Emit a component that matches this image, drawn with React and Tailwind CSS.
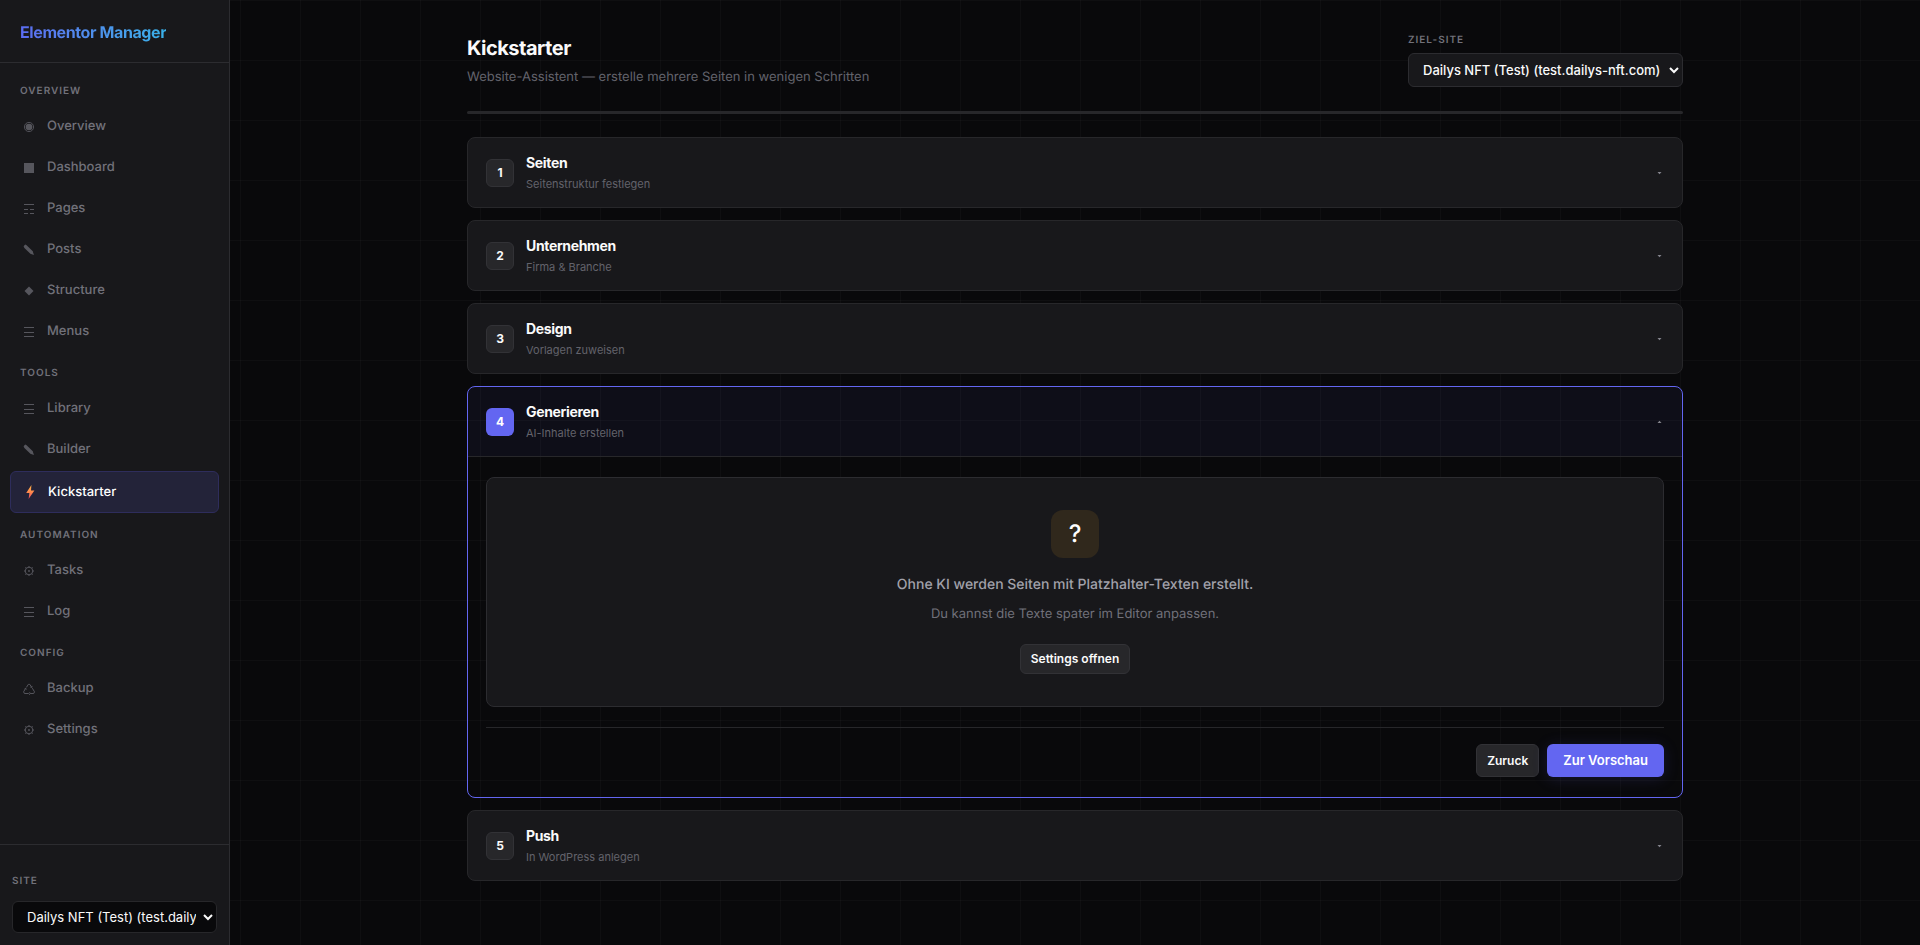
import { useState } from 'react';

const GRID =
  'bg-[#09090b] bg-[linear-gradient(rgba(255,255,255,0.025)_1px,transparent_1px),linear-gradient(90deg,rgba(255,255,255,0.025)_1px,transparent_1px)] bg-[size:60px_60px]';

const ICONS = {
  target: (
    <>
      <circle cx="9" cy="9" r="4.6" fill="none" stroke="currentColor" strokeWidth="0.9" />
      <circle cx="9" cy="9" r="3.3" />
    </>
  ),
  square: <rect x="4" y="4" width="10" height="10" />,
  pages: <path d="M4 4h10v1H4zM4 9h4v1H4zM10 9h4v1h-4zM4 13h4v1H4zM10 13h4v1h-4z" />,
  pencil: <path d="M3.6 5.2 5.2 3.6 6.6 4.2 12.8 10.2 13.3 12.2 14.2 13.8 12.4 13.4 10.4 12.8 4.4 7z" />,
  diamond: <path d="M9 4.5 13.5 9 9 13.5 4.5 9z" />,
  lines: <path d="M4 4h10v1H4zM4 9h10v1H4zM4 13h10v1H4z" />,
  gear: (
    <>
      <circle cx="9" cy="9" r="3.8" fill="none" stroke="currentColor" strokeWidth="1" />
      <circle cx="9" cy="9" r="0.9" />
      <path
        d="M9 4v1.2M9 12.8V14M4 9h1.2M12.8 9H14M5.4 5.4l.9.9M11.7 11.7l.9.9M12.6 5.4l-.9.9M6.3 11.7l-.9.9"
        stroke="currentColor"
        strokeWidth="1"
      />
    </>
  ),
  recycle: (
    <path
      d="M6.4 7.4 8.3 4.4h1.5L11.6 7.2M12.3 8.2l2.2 3.6-.8 1.7h-3.6M8.4 13.5H4.4l-.8-1.7 2-3.4M10 12.2l-1.3 1.3 1.3 1.3M10.4 7.2l1.4.2.2-1.5M4.6 8.8l1.2-.5.5 1.3"
      fill="none"
      stroke="currentColor"
      strokeWidth="1"
    />
  ),
  bolt: (
    <>
      <defs>
        <linearGradient id="bolt" x1="0" y1="0" x2="0" y2="1">
          <stop offset="0" stopColor="#ffb545" />
          <stop offset="0.5" stopColor="#ff8a4c" />
          <stop offset="1" stopColor="#e8455e" />
        </linearGradient>
      </defs>
      <path fill="url(#bolt)" d="M10.4 2 5.2 10h3.2L7.6 16l5.8-8.4H10z" />
    </>
  ),
};

const SECTIONS = [
  {
    label: 'Overview',
    items: [
      ['Overview', 'target'],
      ['Dashboard', 'square'],
      ['Pages', 'pages'],
      ['Posts', 'pencil'],
      ['Structure', 'diamond'],
      ['Menus', 'lines'],
    ],
  },
  {
    label: 'Tools',
    items: [
      ['Library', 'lines'],
      ['Builder', 'pencil'],
      ['Kickstarter', 'bolt'],
    ],
  },
  {
    label: 'Automation',
    items: [
      ['Tasks', 'gear'],
      ['Log', 'lines'],
    ],
  },
  {
    label: 'Config',
    items: [
      ['Backup', 'recycle'],
      ['Settings', 'gear'],
    ],
  },
];

const STEPS = [
  { title: 'Seiten', hint: 'Seitenstruktur festlegen' },
  { title: 'Unternehmen', hint: 'Firma & Branche' },
  { title: 'Design', hint: 'Vorlagen zuweisen' },
  { title: 'Generieren', hint: 'AI-Inhalte erstellen' },
  { title: 'Push', hint: 'In WordPress anlegen' },
];

const SITE = 'Dailys NFT (Test) (test.dailys-nft.com)';

function NavItem({ name, icon, active }) {
  return (
    <a
      href={`#${name.toLowerCase()}`}
      className={
        active
          ? 'flex items-center gap-[9px] h-[42px] px-[10px] rounded-md border border-[#2e2d5c] bg-[#232339] text-white font-medium'
          : 'flex items-center gap-[9px] h-[39px] px-[10px] rounded-md text-[#71717a] font-medium hover:text-zinc-300'
      }
    >
      <svg viewBox="0 0 18 18" className={active ? 'size-[18px]' : 'size-[18px] opacity-70'} fill="currentColor" aria-hidden="true">
        {ICONS[icon]}
      </svg>
      {name}
    </a>
  );
}

function Sidebar() {
  return (
    <aside className="w-[230px] shrink-0 flex flex-col bg-[#18181b] border-r border-[#2c2c30]">
      <div className="h-[63px] px-5 pt-[2px] flex items-center border-b border-[#2c2c30]">
        <span className="text-base font-bold tracking-tight bg-gradient-to-r from-[#5b6cf0] to-[#38b0e8] bg-clip-text text-transparent">
          Elementor Manager
        </span>
      </div>

      <nav className="flex-1 px-[10px] pt-2 text-[13px] leading-[21px]">
        {SECTIONS.map((section) => (
          <div key={section.label}>
            <h2 className="h-9 px-[10px] flex items-center pt-1 text-[10px] font-semibold tracking-[1px] uppercase text-[#71717a]">
              {section.label}
            </h2>
            <div className="flex flex-col gap-[2px] pb-[2px]">
              {section.items.map(([name, icon]) => (
                <NavItem key={name} name={name} icon={icon} active={name === 'Kickstarter'} />
              ))}
            </div>
          </div>
        ))}
      </nav>

      <div className="border-t border-[#2c2c30] px-3 pt-7 pb-3">
        <label htmlFor="site" className="block mb-3 text-[10px] leading-4 font-semibold tracking-[1px] uppercase text-[#71717a]">
          Site
        </label>
        <select
          id="site"
          className="block w-full h-8 pl-[10px] pr-1 rounded-md border border-[#27272a] bg-[#09090b] text-[13px] text-zinc-50"
        >
          <option>{SITE}</option>
        </select>
      </div>
    </aside>
  );
}

function Arrow({ up }) {
  return (
    <svg viewBox="0 0 9 6" className="ml-auto w-[9px] h-[6px] text-[#85858d]" fill="currentColor" aria-hidden="true">
      <path d={up ? 'M2.5 4h4L4.5 1.8z' : 'M2.5 2h4L4.5 4.2z'} />
    </svg>
  );
}

function StepHeader({ number, step, open, onClick }) {
  return (
    <button
      type="button"
      onClick={onClick}
      aria-expanded={open}
      className={
        open
          ? 'w-full h-[70px] px-[18px] flex items-center gap-3 text-left border-b border-[#27272a] bg-[#6366f1]/6'
          : 'w-full h-[69px] px-[18px] flex items-center gap-3 text-left'
      }
    >
      <span
        className={
          open
            ? 'size-7 rounded-md flex items-center justify-center bg-[#6366f1] text-xs font-bold text-white'
            : 'size-7 rounded-md flex items-center justify-center border border-[#323236] bg-[#27272a] text-xs font-bold text-zinc-50'
        }
      >
        {number}
      </span>
      <span className="flex flex-col">
        <span className="text-sm leading-[22px] font-bold tracking-tight text-zinc-50">{step.title}</span>
        <span className="text-[11px] leading-5 text-[#63636b]">{step.hint}</span>
      </span>
      <Arrow up={open} />
    </button>
  );
}

function GeneratePanel() {
  return (
    <div className="px-[18px] pt-5 pb-5">
      <div className="rounded-lg border border-[#2c2c30] bg-[#18181b] py-8 flex flex-col items-center">
        <div className="size-12 rounded-xl bg-[#30281c] flex items-center justify-center text-2xl font-medium text-white">?</div>
        <p className="mt-4 text-sm leading-[22px] font-medium text-[#a1a1aa]">
          Ohne KI werden Seiten mit Platzhalter-Texten erstellt.
        </p>
        <p className="mt-2 text-[13px] leading-5 text-[#71717a]">Du kannst die Texte spater im Editor anpassen.</p>
        <button type="button" className="mt-5 h-[30px] px-[10px] rounded-md border border-[#323236] bg-[#27272a] text-xs font-semibold text-zinc-50">
          Settings offnen
        </button>
      </div>

      <div className="mt-5 pt-4 border-t border-[#27272a] flex justify-end gap-2">
        <button type="button" className="h-[33px] px-[10px] rounded-md border border-[#323236] bg-[#27272a] text-xs font-semibold text-zinc-50">
          Zuruck
        </button>
        <button type="button" className="h-[33px] px-4 rounded-md bg-[#6366f1] text-[13px] font-semibold text-white shadow-[0_2px_16px_rgba(99,102,241,0.15)]">
          Zur Vorschau
        </button>
      </div>
    </div>
  );
}

export default function App() {
  const [current, setCurrent] = useState(3);

  return (
    <div className={`min-h-screen flex font-['Inter',sans-serif] [text-rendering:geometricPrecision] ${GRID}`}>
      <Sidebar />

      <main className="flex-1 min-w-0">
        <div className="max-w-[1280px] mx-auto px-8 pt-8">
          <header className="flex items-start justify-between">
            <div>
              <h1 className="text-xl leading-8 font-bold tracking-tight text-zinc-50">Kickstarter</h1>
              <p className="mt-[3px] text-[13px] leading-5 text-[#63636b]">
                Website-Assistent — erstelle mehrere Seiten in wenigen Schritten
              </p>
            </div>
            <div>
              <label htmlFor="target-site" className="block mb-[5px] text-[10px] leading-4 font-semibold tracking-[1px] uppercase text-[#71717a]">
                Ziel-Site
              </label>
              <select
                id="target-site"
                className="block w-[275px] h-[34px] pl-[10px] pr-1 rounded-md border border-[#2c2c30] bg-[#18181b] text-[13px] font-medium text-zinc-50"
              >
                <option>{SITE}</option>
              </select>
            </div>
          </header>

          <div className="mt-6 h-[3px] rounded-sm bg-[#27272a]" />

          <div className="mt-[23px] flex flex-col gap-3">
            {STEPS.map((step, i) => {
              const open = i === current;
              return (
                <section
                  key={step.title}
                  className={
                    open
                      ? 'rounded-lg border border-[#6366f1] overflow-hidden'
                      : 'rounded-lg border border-[#27272a] bg-[#18181b]'
                  }
                >
                  <StepHeader number={i + 1} step={step} open={open} onClick={() => setCurrent(i)} />
                  {open && <GeneratePanel />}
                </section>
              );
            })}
          </div>
        </div>
      </main>
    </div>
  );
}
